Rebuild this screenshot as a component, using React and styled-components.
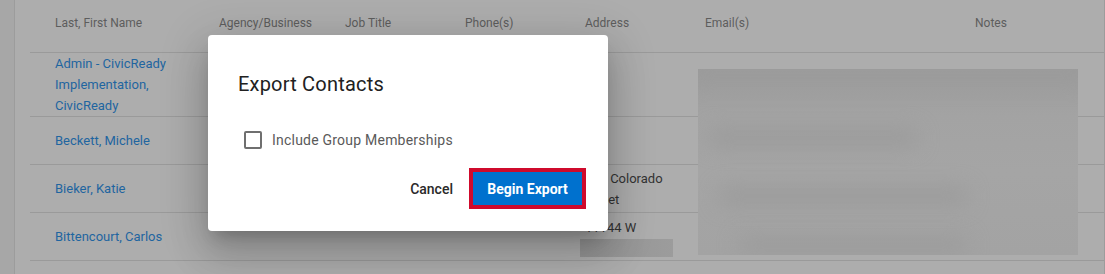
import React, { useState } from "react";
import styled, { createGlobalStyle } from "styled-components";

const GlobalStyle = createGlobalStyle`
  body {
    margin: 0;
    background: #a7a7a7;
    font-family: Roboto, "Liberation Sans", Arial, sans-serif;
  }
`;

const Page = styled.div`
  position: relative;
  height: 274px;
  overflow: hidden;
  display: flex;
  padding-left: 14px;
`;

const Panel = styled.div`
  width: 1078px;
  background: #adadad;
  border-left: 1px solid #9c9c9c;
  border-right: 1px solid #9c9c9c;
  padding-left: 15px;
  position: relative;
`;

const Row = styled.div`
  display: grid;
  grid-template-columns: 164px 126px 120px 120px 120px 270px 1fr;
  border-bottom: 1px solid #9a9a9a;
  min-height: ${(p) => (p.header ? "52px" : "47px")};
  align-items: ${(p) => (p.header ? "start" : "center")};
`;

const HeadCell = styled.div`
  padding: 15px 0 0 25px;
  font-size: 12px;
  line-height: 16px;
  color: #5d5d5d;
`;

const Cell = styled.div`
  padding-left: 25px;
  font-size: 13px;
  line-height: 21px;
  color: ${(p) => (p.link ? "#1f65a0" : "#333333")};
`;

const Redact = styled.div`
  width: 93px;
  height: 18px;
  margin: 1px 0 0 -5px;
  background: linear-gradient(90deg, #939393, #9c9c9c);
`;

const Blur = styled.div`
  position: absolute;
  left: 683px;
  top: 69px;
  width: 380px;
  height: 186px;
  overflow: hidden;
  background: linear-gradient(180deg, #9c9c9c 0%, #a3a3a3 25%, #a5a5a5 55%, #a3a3a3 100%);
`;

const Smudge = styled.div`
  position: absolute;
  border-radius: 10px;
  filter: blur(10px);
  background: #9b9b9b;
`;

const Dialog = styled.div`
  position: absolute;
  left: 208px;
  top: 35px;
  width: 400px;
  height: 196px;
  box-sizing: border-box;
  background: #ffffff;
  border-radius: 4px;
  padding: 36px 22px 0 30px;
  box-shadow: 0 11px 15px -7px rgba(0, 0, 0, 0.2),
    0 24px 38px 3px rgba(0, 0, 0, 0.14), 0 9px 46px 8px rgba(0, 0, 0, 0.12);
`;

const Title = styled.h2`
  margin: 0;
  font-size: 20px;
  line-height: 26px;
  font-weight: 400;
  letter-spacing: 0.2px;
  color: #212121;
`;

const CheckRow = styled.label`
  display: flex;
  align-items: center;
  gap: 10px;
  margin: 31px 0 0 6px;
  height: 24px;
  cursor: pointer;
  font-size: 14px;
  letter-spacing: 0.22px;
  color: #5a5a5a;
`;

const Box = styled.span`
  width: 18px;
  height: 18px;
  box-sizing: border-box;
  border: 2px solid #6f6f6f;
  border-radius: 2px;
  background: ${(p) => (p.checked ? "#0071ce" : "transparent")};
`;

const Actions = styled.div`
  display: flex;
  justify-content: flex-end;
  align-items: center;
  gap: 20px;
  margin-top: 20px;
  padding-right: 4px;
`;

const TextButton = styled.button`
  border: 0;
  background: none;
  padding: 0;
  font-family: inherit;
  font-size: 14px;
  font-weight: 500;
  color: #2a2a2a;
  cursor: pointer;
`;

const PrimaryButton = styled.button`
  width: 109px;
  height: 33px;
  border: 0;
  background: #0071ce;
  color: #ffffff;
  font-family: inherit;
  font-size: 14px;
  font-weight: 700;
  outline: 4px solid #cf0a2c;
  outline-offset: 0;
  cursor: pointer;
`;

const headers = ["Last, First Name", "Agency/Business", "Job Title", "Phone(s)", "Address", "Email(s)", "Notes"];

const contacts = [
  { name: "Admin - CivicReady Implementation, CivicReady" },
  { name: "Beckett, Michele" },
  { name: "Bieker, Katie", address: ["200 Colorado", "Street"] },
  { name: "Bittencourt, Carlos", address: ["11144 W"], redact: true },
];

export default function App() {
  const [groups, setGroups] = useState(false);

  return (
    <>
      <GlobalStyle />
      <Page>
        <Panel>
          <Row header>
            {headers.map((h) => (
              <HeadCell key={h}>{h}</HeadCell>
            ))}
          </Row>
          {contacts.map((c) => (
            <Row key={c.name}>
              <Cell link>{c.name}</Cell>
              <Cell />
              <Cell />
              <Cell />
              <Cell>
                {c.address && c.address.map((l) => <div key={l}>{l}</div>)}
                {c.redact && <Redact />}
              </Cell>
              <Cell />
              <Cell />
            </Row>
          ))}
          <Blur>
            <Smudge style={{ left: -10, top: -8, width: 400, height: 22 }} />
            <Smudge style={{ left: 10, top: 60, width: 210, height: 18 }} />
            <Smudge style={{ left: 20, top: 118, width: 250, height: 18 }} />
            <Smudge style={{ left: 40, top: 168, width: 230, height: 16 }} />
          </Blur>
        </Panel>
        <Dialog>
          <Title>Export Contacts</Title>
          <CheckRow onClick={() => setGroups(!groups)}>
            <Box checked={groups} />
            Include Group Memberships
          </CheckRow>
          <Actions>
            <TextButton>Cancel</TextButton>
            <PrimaryButton>Begin Export</PrimaryButton>
          </Actions>
        </Dialog>
      </Page>
    </>
  );
}
